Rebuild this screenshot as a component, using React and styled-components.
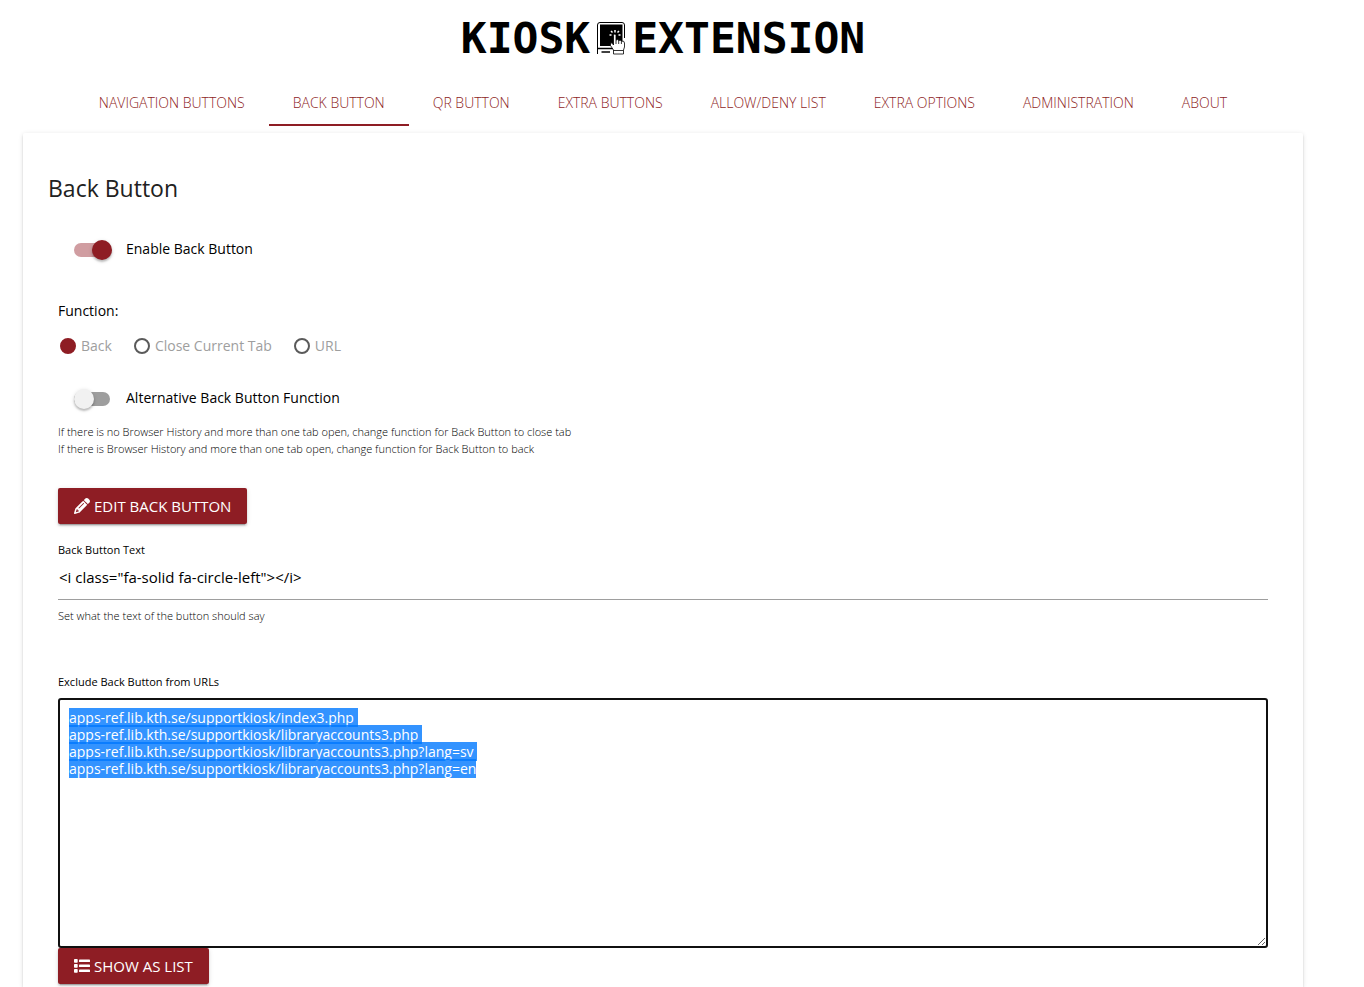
import React, { useEffect, useRef } from "react";
import styled, { createGlobalStyle } from "styled-components";
import { FaPencil } from "react-icons/fa6";

const brand = "#8e1d24";

const GlobalStyle = createGlobalStyle`
  *, *::before, *::after { box-sizing: border-box; }
  body {
    margin: 0;
    background: #fff;
    color: #000;
    font-family: "Open Sans", "Noto Sans", sans-serif;
    font-size: 14px;
    line-height: 24px;
  }
`;

const Page = styled.div`
  display: flex;
  flex-direction: column;
  min-height: 100vh;
  padding: 0 61px 0 23px;
`;

const Logo = styled.header`
  display: flex;
  align-items: center;
  justify-content: center;
  gap: 6px;
  height: 78px;
  padding-bottom: 2px;
  font: bold 43px/76px "DejaVu Sans Mono", monospace;
`;

const Tabs = styled.nav`
  display: flex;
  justify-content: center;
  height: 48px;
  margin-bottom: 7px;
`;

const Tab = styled.a`
  padding: 1px 24px 0;
  border-bottom: 2px solid ${(p) => (p.$active ? brand : "transparent")};
  color: ${brand};
  font-size: 14px;
  font-weight: 300;
  line-height: 48px;
  text-decoration: none;
  text-transform: uppercase;
  white-space: nowrap;
`;

const Card = styled.main`
  flex: 1;
  padding: 37px 25px 3px;
  border-radius: 2px 2px 0 0;
  box-shadow: 0 2px 2px rgba(0, 0, 0, 0.14), 0 1px 5px rgba(0, 0, 0, 0.12),
    0 3px 1px -2px rgba(0, 0, 0, 0.2);
`;

const Title = styled.h1`
  margin: 0 0 31px;
  color: #212121;
  font-size: 23px;
  font-weight: 400;
  line-height: 36px;
`;

const Form = styled.form`
  display: flex;
  flex-direction: column;
  align-items: flex-start;
  padding: 0 10px;
`;

const SwitchRow = styled.label`
  display: flex;
  align-items: center;
  gap: 16px;
  padding-left: 16px;
`;

const SwitchInput = styled.input`
  appearance: none;
  display: flex;
  align-items: center;
  width: 36px;
  height: 14px;
  margin: 2px 0 0;
  border-radius: 7px;
  background: #9e9e9e;

  &::before {
    content: "";
    flex: none;
    width: 20px;
    height: 20px;
    border-radius: 50%;
    background: #f1f1f1;
    box-shadow: 0 2px 2px rgba(0, 0, 0, 0.2), 0 1px 4px rgba(0, 0, 0, 0.14);
  }

  &:checked { background: #d09da1; }
  &:checked::before { margin-left: 18px; background: ${brand}; }
`;

const Choices = styled.fieldset`
  display: flex;
  gap: 22px;
  margin: 38px 0 28px;
  padding: 0;
  border: 0;
`;

const Legend = styled.legend`
  margin-bottom: 11px;
  padding: 0;
`;

const Choice = styled.label`
  display: flex;
  align-items: center;
  gap: 5px;
  padding-left: ${(p) => (p.$first ? "2px" : "0")};
  color: #9e9e9e;
`;

const Radio = styled.input`
  appearance: none;
  width: 16px;
  height: 16px;
  margin: 0;
  border: 2px solid #5a5a5a;
  border-radius: 50%;

  &:checked { border-color: ${brand}; background: ${brand}; }
`;

const Hint = styled.p`
  margin: ${(p) => p.$top} 0 0;
  color: #000;
  font-size: 11px;
  font-weight: 300;
  line-height: 17px;
`;

const Button = styled.button`
  display: flex;
  align-items: center;
  gap: 4px;
  height: 36px;
  padding: 0 16px;
  border: 0;
  border-radius: 2px;
  background: ${brand};
  color: #fff;
  font: inherit;
  font-size: 15px;
  text-transform: uppercase;
  box-shadow: 0 2px 2px rgba(0, 0, 0, 0.14), 0 1px 5px rgba(0, 0, 0, 0.12),
    0 3px 1px -2px rgba(0, 0, 0, 0.2);
`;

const EditButton = styled(Button)`
  margin: 31px 0 17px;
`;

const FieldLabel = styled.label`
  font-size: 11px;
  line-height: 18px;
`;

const TextInput = styled.input`
  width: 100%;
  height: 41px;
  padding: 0 1px 5px;
  border: 0;
  border-bottom: 1px solid #9e9e9e;
  outline: 0;
  background: transparent;
  color: #000;
  font: inherit;
  font-size: 15px;
`;

const UrlLabel = styled(FieldLabel)`
  margin: 49px 0 7px;
`;

const UrlArea = styled.textarea`
  width: 100%;
  height: 250px;
  padding: 9px;
  border: 2px solid #101010;
  border-radius: 3px;
  outline: 0;
  color: #000;
  font: inherit;
  line-height: 17px;
  resize: both;

  &::selection { background: rgba(0, 120, 255, 0.8); color: #fff; }
`;

const urls = [
  "apps-ref.lib.kth.se/supportkiosk/index3.php",
  "apps-ref.lib.kth.se/supportkiosk/libraryaccounts3.php",
  "apps-ref.lib.kth.se/supportkiosk/libraryaccounts3.php?lang=sv",
  "apps-ref.lib.kth.se/supportkiosk/libraryaccounts3.php?lang=en",
].join("\n");

const tabs = [
  "Navigation Buttons",
  "Back Button",
  "QR Button",
  "Extra Buttons",
  "Allow/Deny List",
  "Extra Options",
  "Administration",
  "About",
];

function KioskIcon() {
  return (
    <svg width="30" height="33" viewBox="0 0 30 33" fill="none" stroke="#000" aria-hidden="true">
      <path d="M1.5 32V3Q1.5 .5 4 .5H26Q28.500 .5 28.500 3V16" />
      <path d="M4 2.500H26.500V24H4Z" fill="#000" stroke="none" />
      <path d="M1.500 26.500H17" strokeWidth="1.500" />
      <path d="M5.500 30H14" strokeWidth="1.500" />
      <path d="M19 8V10.500M15 9l1.500 1.500M23 9l-1.500 1.500M13.500 13H15.500M22.500 13h2" stroke="#fff" strokeWidth="1.500" />
      <path
        d="M17.500 23V13.500Q17.500 12 18.800 12T20 13.500V18Q22 17 22.700 18.500 24.800 17.500 25.400 19.200 28.500 18.500 28.500 21V25L27.500 28V32H17.500V28L14.500 23.500V21Q16 20 17.500 23Z"
        fill="#fff"
        strokeWidth=".8"
      />
      <path d="M20 18V22M22.700 18.500V22M25.400 19.200V22M17.500 28.500H27" strokeWidth=".8" />
    </svg>
  );
}

function ListIcon() {
  return (
    <svg width="16" height="16" viewBox="0 0 16 16" fill="currentColor" aria-hidden="true">
      {[1, 6, 11].map((y) => (
        <g key={y}>
          <rect x="0" y={y} width="3.700" height="3.700" rx=".7" />
          <rect x="5" y={y + 0.6} width="11" height="2.500" rx=".7" />
        </g>
      ))}
    </svg>
  );
}

export default function App() {
  const area = useRef(null);

  useEffect(() => {
    area.current.focus({ preventScroll: true });
    area.current.select();
  }, []);

  return (
    <>
      <GlobalStyle />
      <Page>
        <Logo>
          <span>KIOSK</span>
          <KioskIcon />
          <span>EXTENSION</span>
        </Logo>
        <Tabs>
          {tabs.map((name) => (
            <Tab key={name} href="#" $active={name === "Back Button"}>
              {name}
            </Tab>
          ))}
        </Tabs>
        <Card>
          <Title>Back Button</Title>
          <Form>
            <SwitchRow>
              <SwitchInput type="checkbox" defaultChecked />
              Enable Back Button
            </SwitchRow>
            <Choices>
              <Legend>Function:</Legend>
              <Choice $first>
                <Radio type="radio" name="function" defaultChecked />
                Back
              </Choice>
              <Choice>
                <Radio type="radio" name="function" />
                Close Current Tab
              </Choice>
              <Choice>
                <Radio type="radio" name="function" />
                URL
              </Choice>
            </Choices>
            <SwitchRow>
              <SwitchInput type="checkbox" />
              Alternative Back Button Function
            </SwitchRow>
            <Hint $top="13px">
              If there is no Browser History and more than one tab open, change function for Back Button to close tab
              <br />
              If there is Browser History and more than one tab open, change function for Back Button to back
            </Hint>
            <EditButton type="button">
              <FaPencil size={16} />
              Edit Back Button
            </EditButton>
            <FieldLabel htmlFor="button-text">Back Button Text</FieldLabel>
            <TextInput id="button-text" defaultValue={'<i class="fa-solid fa-circle-left"></i>'} />
            <Hint $top="7px">Set what the text of the button should say</Hint>
            <UrlLabel htmlFor="excluded-urls">Exclude Back Button from URLs</UrlLabel>
            <UrlArea id="excluded-urls" ref={area} defaultValue={urls} spellCheck={false} />
            <Button type="button">
              <ListIcon />
              Show as list
            </Button>
          </Form>
        </Card>
      </Page>
    </>
  );
}
